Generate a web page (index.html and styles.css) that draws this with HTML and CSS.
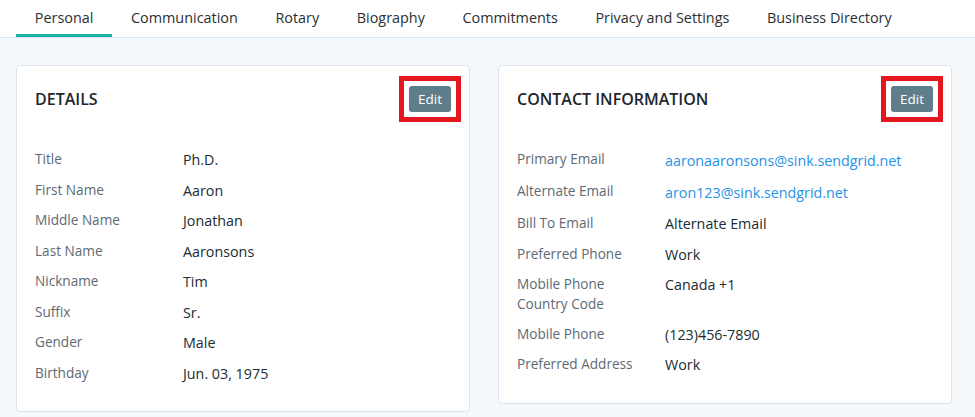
FILE: index.html
```html
<!DOCTYPE html>
<html lang="en">
<head>
    <meta charset="UTF-8">
    <meta name="viewport" content="width=device-width, initial-scale=1.0">
    <title>Member Profile</title>
    <link rel="stylesheet" href="styles.css">
</head>
<body>
    <nav class="tabs">
        <a class="tab active" href="#">Personal</a>
        <a class="tab" href="#">Communication</a>
        <a class="tab" href="#">Rotary</a>
        <a class="tab" href="#">Biography</a>
        <a class="tab" href="#">Commitments</a>
        <a class="tab" href="#">Privacy and Settings</a>
        <a class="tab" href="#">Business Directory</a>
    </nav>

    <main class="content">
        <section class="card">
            <div class="card-header">
                <h2>DETAILS</h2>
                <button class="edit-btn highlight">Edit</button>
            </div>
            <dl class="fields">
                <div class="field"><dt>Title</dt><dd>Ph.D.</dd></div>
                <div class="field"><dt>First Name</dt><dd>Aaron</dd></div>
                <div class="field"><dt>Middle Name</dt><dd>Jonathan</dd></div>
                <div class="field"><dt>Last Name</dt><dd>Aaronsons</dd></div>
                <div class="field"><dt>Nickname</dt><dd>Tim</dd></div>
                <div class="field"><dt>Suffix</dt><dd>Sr.</dd></div>
                <div class="field"><dt>Gender</dt><dd>Male</dd></div>
                <div class="field"><dt>Birthday</dt><dd>Jun. 03, 1975</dd></div>
            </dl>
        </section>

        <section class="card">
            <div class="card-header">
                <h2>CONTACT INFORMATION</h2>
                <button class="edit-btn highlight">Edit</button>
            </div>
            <dl class="fields">
                <div class="field"><dt>Primary Email</dt><dd><a href="#">aaronaaronsons@sink.sendgrid.net</a></dd></div>
                <div class="field"><dt>Alternate Email</dt><dd><a href="#">aron123@sink.sendgrid.net</a></dd></div>
                <div class="field"><dt>Bill To Email</dt><dd>Alternate Email</dd></div>
                <div class="field"><dt>Preferred Phone</dt><dd>Work</dd></div>
                <div class="field"><dt>Mobile Phone<br>Country Code</dt><dd>Canada +1</dd></div>
                <div class="field"><dt>Mobile Phone</dt><dd>(123)456-7890</dd></div>
                <div class="field"><dt>Preferred Address</dt><dd>Work</dd></div>
            </dl>
        </section>
    </main>
</body>
</html>
```

FILE: styles.css
```css
body {
    margin: 0;
    font-family: "Open Sans", Arial, sans-serif;
    background-color: #f6f9fc;
    color: #212b32;
}
.tabs {
    display: flex;
    padding-left: 16px;
    background: #ffffff;
    border-bottom: 1px solid #dbe5ee;
}
.tab {
    padding: 7px 18.8px 6px;
    font-size: 14.4px;
    line-height: 21px;
    color: #2a2f33;
    text-decoration: none;
    border-bottom: 3px solid transparent;
}
.tab.active {
    border-bottom-color: #19b3a6;
}
.content {
    display: grid;
    grid-template-columns: 454px 454px;
    align-items: start;
    gap: 28px;
    padding: 27px 23px 0 16px;
}
.card {
    background: #ffffff;
    border: 1px solid #dbe4ec;
    border-radius: 4px;
    padding: 20px 18px 18px 18px;
}
.card-header {
    display: flex;
    justify-content: space-between;
    align-items: center;
    margin-bottom: 37px;
}
.card-header h2 {
    margin: 0;
    font-size: 16px;
    font-weight: 600;
    color: #1d262d;
}
.edit-btn {
    position: relative;
    width: 42px;
    height: 26px;
    padding: 0;
    border: none;
    border-radius: 3px;
    background-color: #607d8b;
    color: #ffffff;
    font-family: inherit;
    font-size: 13.5px;
    cursor: pointer;
}
/* red callout frame drawn around the button */
.highlight::after {
    content: "";
    position: absolute;
    top: -10px;
    left: -10px;
    right: -10px;
    bottom: -10px;
    border: 5px solid #e3171d;
}
.fields {
    margin: 0;
}
.field {
    display: grid;
    grid-template-columns: 148px 1fr;
    margin-bottom: 9.5px;
}
.field dt {
    font-size: 13.6px;
    line-height: 20px;
    color: #5d6a73;
}
.field dd {
    margin: 0;
    padding-top: 1px;
    font-size: 14.3px;
    line-height: 20px;
}
.field a {
    display: inline-block;
    line-height: 21.5px;
    color: #1f93e6;
    text-decoration: none;
}
```
